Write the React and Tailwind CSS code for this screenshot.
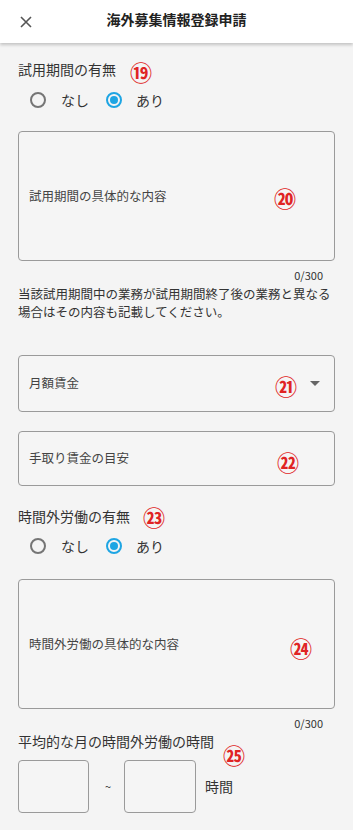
import React from "react";

const font = { fontFamily: '"Noto Sans CJK JP", "Noto Sans", sans-serif' };

function Num({ children, className = "" }) {
  return (
    <span
      className={"text-[22px] leading-none font-bold text-[#e02424] " + className}
      style={font}
    >
      {children}
    </span>
  );
}

function Radio({ checked }) {
  if (checked) {
    return (
      <span className="w-[16px] h-[16px] rounded-full border-2 border-[#1ea5e3] flex items-center justify-center">
        <span className="w-[8px] h-[8px] rounded-full bg-[#1ea5e3]"></span>
      </span>
    );
  }
  return <span className="w-[16px] h-[16px] rounded-full border-2 border-[#757575]"></span>;
}

function Radios() {
  return (
    <div className="h-[24px] flex items-center pl-[12px] text-[14px] text-[#333]">
      <Radio checked={false} />
      <span className="ml-[15px]">なし</span>
      <span className="ml-[17px]"><Radio checked={true} /></span>
      <span className="ml-[14px]">あり</span>
    </div>
  );
}

export default function App() {
  return (
    <div className="w-[353px] h-[830px] bg-[#f4f4f4] overflow-hidden" style={font}>
      <div className="h-[43px] bg-white shadow-[0_2px_3px_rgba(0,0,0,0.2)] relative flex items-center">
        <svg className="ml-[20px]" width="12" height="12" viewBox="0 0 12 12">
          <path d="M1 1L11 11M11 1L1 11" stroke="#555" strokeWidth="1.6" />
        </svg>
        <div className="flex-1 text-center text-[14px] font-bold text-[#222] mr-[32px] -mt-[4px]">
          海外募集情報登録申請
        </div>
      </div>

      <div className="px-[18px]">
        <div className="mt-[16px] h-[20px] flex items-center text-[14px] text-[#333]">
          <span>試用期間の有無</span>
          <Num className="ml-[14px] mt-[3px]">⑲</Num>
        </div>
        <div className="mt-[9px]">
          <Radios />
        </div>

        <div className="mt-[19px] h-[130px] border border-[#9a9a9a] rounded-[4px] bg-[#f5f5f5] flex items-center pl-[10px] text-[12.5px] text-[#444]">
          <span className="w-[245px]">試用期間の具体的な内容</span>
          <Num className="mt-[2px]">⑳</Num>
        </div>
        <div className="mt-[7px] h-[14px] flex justify-end pr-[12px] text-[11px] text-[#333] leading-none items-center">
          0/300
        </div>
        <div className="mt-[3px] text-[12.5px] leading-[18px] text-[#333]">
          当該試用期間中の業務が試用期間終了後の業務と異なる場合はその内容も記載してください。
        </div>

        <div className="mt-[34px] h-[57px] border border-[#9a9a9a] rounded-[4px] bg-[#f5f5f5] flex items-center pl-[10px] text-[12.5px] text-[#444]">
          <span className="w-[246px]">月額賃金</span>
          <Num className="mt-[2px]">㉑</Num>
          <svg className="ml-[13px]" width="10" height="6" viewBox="0 0 10 6">
            <path d="M0 0H10L5 5Z" fill="#666" />
          </svg>
        </div>

        <div className="mt-[19px] h-[55px] border border-[#9a9a9a] rounded-[4px] bg-[#f5f5f5] flex items-center pl-[10px] text-[12.5px] text-[#444]">
          <span className="w-[248px]">手取り賃金の目安</span>
          <Num className="mt-[4px]">㉒</Num>
        </div>

        <div className="mt-[20px] h-[20px] flex items-center text-[14px] text-[#333]">
          <span>時間外労働の有無</span>
          <Num className="ml-[13px]">㉓</Num>
        </div>
        <div className="mt-[8px]">
          <Radios />
        </div>

        <div className="mt-[21px] h-[130px] border border-[#9a9a9a] rounded-[4px] bg-[#f5f5f5] flex items-center pl-[10px] text-[12.5px] text-[#444]">
          <span className="w-[261px]">時間外労働の具体的な内容</span>
          <Num className="mt-[6px]">㉔</Num>
        </div>
        <div className="mt-[7px] h-[14px] flex justify-end pr-[12px] text-[11px] text-[#333] leading-none items-center">
          0/300
        </div>

        <div className="mt-[1px] h-[20px] flex items-center text-[14px] text-[#333] relative">
          <span>平均的な月の時間外労働の時間</span>
          <Num className="ml-[9px] relative top-[13px]">㉕</Num>
        </div>
        <div className="mt-[9px] flex items-center text-[#333]">
          <div className="w-[71px] h-[53px] border border-[#9a9a9a] rounded-[4px] bg-[#f5f5f5]"></div>
          <span className="ml-[16px] mr-[13px] text-[11px]">~</span>
          <div className="w-[72px] h-[53px] border border-[#9a9a9a] rounded-[4px] bg-[#f5f5f5]"></div>
          <span className="ml-[9px] text-[14px]">時間</span>
        </div>
      </div>
    </div>
  );
}
